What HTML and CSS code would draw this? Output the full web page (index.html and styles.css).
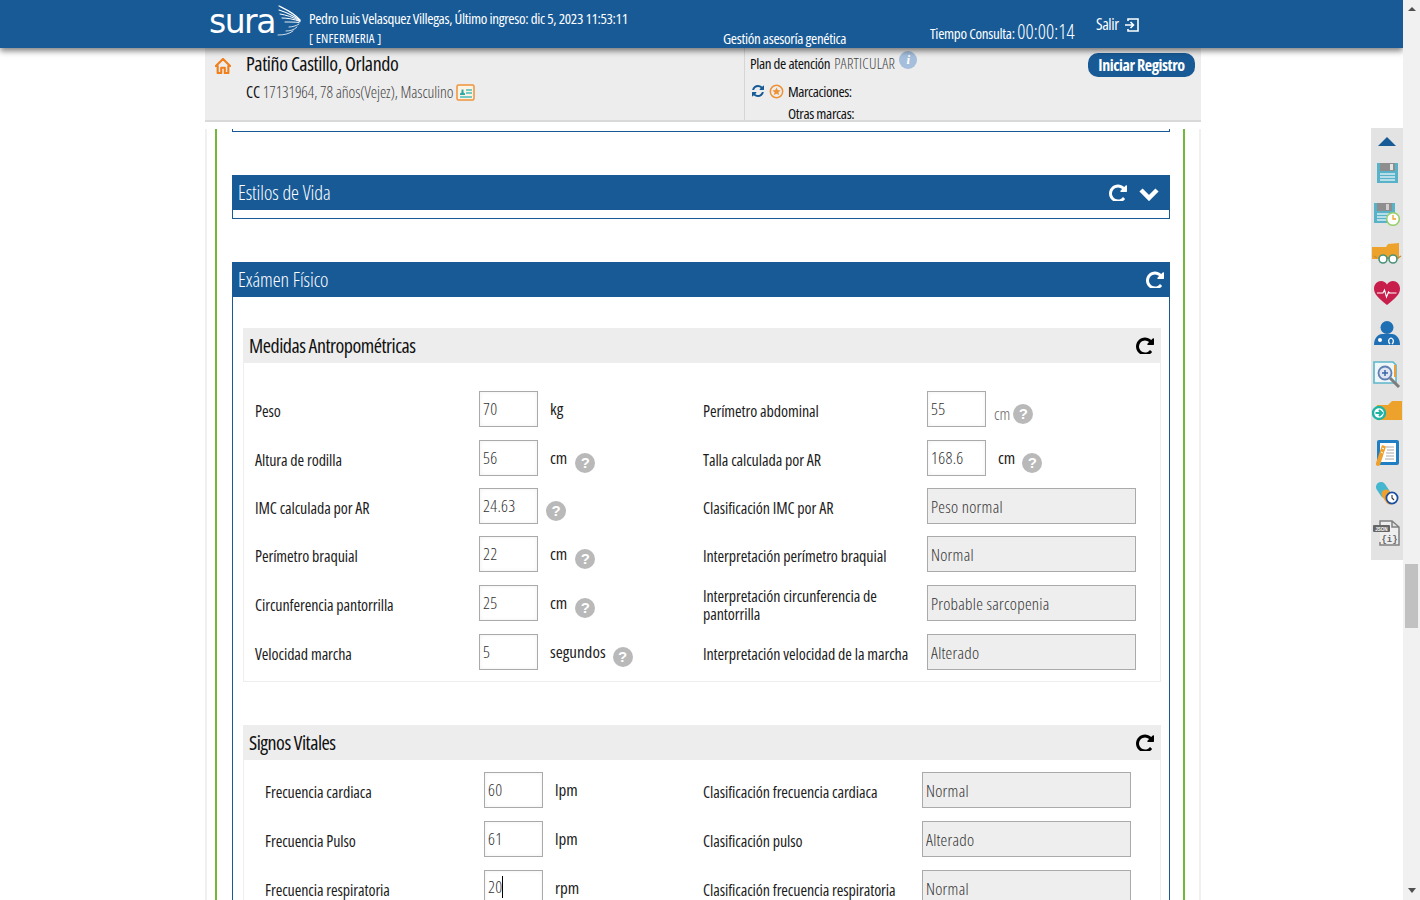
FILE: index.html
```html
<!DOCTYPE html>
<html lang="es">
<head>
<meta charset="utf-8">
<title>Historia clínica</title>
<link rel="stylesheet" href="styles.css">
</head>
<body>
<div class="viewport">
  <header class="topbar">
    <div class="logo">
      <span class="logo-text">sura</span>
      <svg class="logo-wing" viewBox="0 0 24 34" width="24" height="34" fill="none" stroke="#fff" stroke-linecap="round">
        <path d="M2 1 C8 4 17 8 23 15" stroke-width="1.2"/>
        <path d="M2 5 C8 7 16 10 23 15.500" stroke-width="1.1"/>
        <path d="M3 9 C9 10 16 12 23 16" stroke-width="1"/>
        <path d="M5 13 C10 13 17 14 23 16.500" stroke-width="1"/>
        <path d="M8 17 C12 17 18 17 22 17.500" stroke-width=".9"/>
        <path d="M22 19 C19 21 15 22 12 22" stroke-width=".8"/>
        <path d="M20 22 C17 25 13 26 9 26" stroke-width=".8"/>
        <path d="M16 26 C12 29 7 30 1 30" stroke-width=".8"/>
      </svg>
    </div>
    <div class="user">
      <div class="user-name">Pedro Luis Velasquez Villegas, Último ingreso: dic 5, 2023 11:53:11</div>
      <div class="user-role">[ ENFERMERIA ]</div>
    </div>
    <div class="module">Gestión asesoría genética</div>
    <div class="timer"><span class="timer-label">Tiempo Consulta:</span> <span class="timer-value">00:00:14</span></div>
    <div class="exit">Salir
      <svg viewBox="0 0 16 16" width="16" height="16" fill="none" stroke="#fff" stroke-width="1.6"><path d="M4 4V2h10v12H4v-2"/><path d="M1 8h8M6.500 5l3 3-3 3"/></svg>
    </div>
  </header>

  <div class="page">
    <section class="patient">
      <div class="patient-left">
        <svg class="home" viewBox="0 0 18 18" width="16" height="16"><path d="M9 1 L17 9 L15 9 L15 17 L11 17 L11 11 L7 11 L7 17 L3 17 L3 9 L1 9 Z" fill="none" stroke="#f07f1c" stroke-width="2.400" stroke-linejoin="round"/></svg>
        <div>
          <div class="patient-name">Patiño Castillo, Orlando</div>
          <div class="patient-id"><span class="id-type">CC</span> 17131964, 78 años(Vejez), Masculino
            <svg class="card" viewBox="0 0 19 17" width="19" height="17"><rect x="1" y="1" width="17" height="15" rx="1.500" fill="#fbf3e4" stroke="#f0923a" stroke-width="1.500"/><path d="M4 11h5V9.500L7.500 8.500V5.500h-2v3L4 9.500Z" fill="#2aa9a5"/><path d="M10 6h6M10 9h6M4 13h12" stroke="#4cbcb8" stroke-width="1.300"/></svg>
          </div>
        </div>
      </div>
      <div class="patient-right">
        <div class="plan">Plan de atención <span class="plan-value">PARTICULAR</span><span class="info">i</span></div>
        <div class="marks">
          <svg viewBox="0 0 1536 1536" width="12" height="12" fill="#175a96"><path d="M1511 928q0 5-1 7-64 268-268 434.5t-478 166.5q-146 0-282.5-55t-243.5-157l-129 129q-19 19-45 19t-45-19-19-45v-448q0-26 19-45t45-19h448q26 0 45 19t19 45-19 45l-137 137q71 66 161 102t187 36q134 0 250-65t186-179q11-17 53-117 8-23 30-23h192q13 0 22.5 9.5t9.5 22.5zm25-800v448q0 26-19 45t-45 19h-448q-26 0-45-19t-19-45 19-45l138-138q-148-137-349-137-134 0-250 65t-186 179q-11 17-53 117-8 23-30 23h-199q-13 0-22.5-9.5t-9.5-22.5v-7q65-268 270-434.5t480-166.5q146 0 284 55.5t245 156.5l130-129q19-19 45-19t45 19 19 45z"/></svg>
          <svg viewBox="0 0 16 16" width="15" height="15"><circle cx="8" cy="8" r="6.600" fill="none" stroke="#ef9236" stroke-width="1.600"/><path d="M8 3.600l1.300 2.900 3.100.3-2.300 2 .7 3L8 10.300l-2.800 1.500.7-3-2.300-2 3.100-.3Z" fill="#ef9236"/></svg>
          <span>Marcaciones:</span>
        </div>
        <div class="other-marks">Otras marcas:</div>
      </div>
      <button class="start-btn">Iniciar Registro</button>
    </section>

    <main class="content">
      <div class="frame">
        <div class="panel-end"></div>

        <section class="panel collapsed">
          <div class="panel-head">
            <span>Estilos de Vida</span>
            <span class="head-tools">
              <svg class="reload" viewBox="0 0 1536 1536"><use href="#repeat"/></svg>
              <svg class="chev" viewBox="0 0 20 14" width="20" height="14" fill="none" stroke="#fff" stroke-width="4.500"><path d="M2 3l8 8 8-8"/></svg>
            </span>
          </div>
        </section>

        <section class="panel">
          <div class="panel-head">
            <span>Exámen Físico</span>
            <span class="head-tools">
              <svg class="reload" viewBox="0 0 1536 1536"><use href="#repeat"/></svg>
            </span>
          </div>
          <div class="panel-body">
            <section class="sub">
              <div class="sub-head"><span>Medidas Antropométricas</span><svg class="reload dark" viewBox="0 0 1536 1536"><use href="#repeat"/></svg></div>
              <div class="sub-body">
                <div class="row">
                  <label class="lbl">Peso</label>
                  <div class="cell"><input class="inp" value="70"><span class="unit">kg</span></div>
                  <label class="lbl">Perímetro abdominal</label>
                  <div class="cell"><input class="inp" value="55"><span class="unit unit-soft">cm</span><span class="help help-near">?</span></div>
                </div>
                <div class="row row-wide">
                  <label class="lbl">Altura de rodilla</label>
                  <div class="cell"><input class="inp" value="56"><span class="unit">cm</span><span class="help">?</span></div>
                  <label class="lbl">Talla calculada por AR</label>
                  <div class="cell"><input class="inp" value="168.6"><span class="unit">cm</span><span class="help help-tight">?</span></div>
                </div>
                <div class="row">
                  <label class="lbl">IMC calculada por AR</label>
                  <div class="cell"><input class="inp" value="24.63"><span class="help help-only">?</span></div>
                  <label class="lbl">Clasificación IMC por AR</label>
                  <div class="cell"><input class="inp ro" value="Peso normal" readonly></div>
                </div>
                <div class="row">
                  <label class="lbl">Perímetro braquial</label>
                  <div class="cell"><input class="inp" value="22"><span class="unit">cm</span><span class="help">?</span></div>
                  <label class="lbl">Interpretación perímetro braquial</label>
                  <div class="cell"><input class="inp ro" value="Normal" readonly></div>
                </div>
                <div class="row row-wide">
                  <label class="lbl">Circunferencia pantorrilla</label>
                  <div class="cell"><input class="inp" value="25"><span class="unit">cm</span><span class="help">?</span></div>
                  <label class="lbl lbl-two">Interpretación circunferencia de pantorrilla</label>
                  <div class="cell"><input class="inp ro" value="Probable sarcopenia" readonly></div>
                </div>
                <div class="row row-wide">
                  <label class="lbl">Velocidad marcha</label>
                  <div class="cell"><input class="inp" value="5"><span class="unit">segundos</span><span class="help help-tight">?</span></div>
                  <label class="lbl">Interpretación velocidad de la marcha</label>
                  <div class="cell"><input class="inp ro" value="Alterado" readonly></div>
                </div>
              </div>
            </section>

            <section class="sub">
              <div class="sub-head"><span>Signos Vitales</span><svg class="reload dark" viewBox="0 0 1536 1536"><use href="#repeat"/></svg></div>
              <div class="sub-body vitals">
                <div class="row">
                  <label class="lbl">Frecuencia cardiaca</label>
                  <div class="cell"><input class="inp" value="60"><span class="unit">lpm</span></div>
                  <label class="lbl">Clasificación frecuencia cardiaca</label>
                  <div class="cell"><input class="inp ro" value="Normal" readonly></div>
                </div>
                <div class="row row-wide">
                  <label class="lbl">Frecuencia Pulso</label>
                  <div class="cell"><input class="inp" value="61"><span class="unit">lpm</span></div>
                  <label class="lbl">Clasificación pulso</label>
                  <div class="cell"><input class="inp ro" value="Alterado" readonly></div>
                </div>
                <div class="row row-wide">
                  <label class="lbl">Frecuencia respiratoria</label>
                  <div class="cell"><span class="inp inp-focus">20</span><span class="unit">rpm</span></div>
                  <label class="lbl">Clasificación frecuencia respiratoria</label>
                  <div class="cell"><input class="inp ro" value="Normal" readonly></div>
                </div>
              </div>
            </section>
          </div>
        </section>
      </div>
    </main>
  </div>

  <nav class="tools">
    <div class="tool tool-first"><svg viewBox="0 0 18 9" width="18" height="9"><path d="M0 9 L9 0 L18 9Z" fill="#175a96"/></svg></div>
    <div class="tool"><svg viewBox="0 0 21 20" width="21" height="20"><path d="M0 0h21v20H0z" fill="#58b3c9"/><path d="M3 0h15v8H3z" fill="#8e8e8e"/><path d="M13 1h3v6h-3z" fill="#e4e4e4"/><path d="M3 11h15M3 14h15M3 17h15" stroke="#d8eef3" stroke-width="1.500"/></svg></div>
    <div class="tool tool-low"><svg viewBox="0 0 26 23" width="26" height="23"><path d="M0 0h21v20H0z" fill="#58b3c9"/><path d="M3 0h15v8H3z" fill="#8e8e8e"/><path d="M12 1h3v6h-3z" fill="#cfcfcf"/><path d="M3 11h12M3 14h10M3 17h9" stroke="#d8eef3" stroke-width="1.500"/><circle cx="19" cy="16" r="6.300" fill="#fff" stroke="#97cf6a" stroke-width="1.500"/><path d="M19 12v4h3" stroke="#f0a030" stroke-width="1.300" fill="none"/></svg></div>
    <div class="tool"><svg viewBox="0 0 30 21" width="30" height="21"><path d="M0 4h14l2-3 11-1v16H0z" fill="#eda32b"/><path d="M2 13l3 2M14 15h3M26 15l3-2" stroke="#c98a3a" stroke-width="1.400"/><circle cx="11" cy="16" r="4" fill="#fff" stroke="#4a9278" stroke-width="1.600"/><circle cx="21" cy="16" r="4" fill="#fff" stroke="#4a9278" stroke-width="1.600"/></svg></div>
    <div class="tool"><svg viewBox="0 0 26 24" width="26" height="24"><path d="M13 24C5 17.500 0 13.500 0 7.500C0 3 3.500 0 7 0c2.500 0 4.800 1.300 6 3.500C14.200 1.300 16.500 0 19 0c3.500 0 7 3 7 7.500C26 13.500 21 17.500 13 24Z" fill="#c71e4b"/><path d="M3 12h6l1.500-3 2 7 2-5 1 1h7" fill="none" stroke="#fff" stroke-width="1.100"/></svg></div>
    <div class="tool"><svg viewBox="0 0 26 24" width="26" height="24"><circle cx="13" cy="6.500" r="6.500" fill="#1f6fb5"/><path d="M0 24c0-7 4-11 8-11h10c4 0 8 4 8 11Z" fill="#1f6fb5"/><circle cx="6" cy="19" r="2" fill="#fff"/><path d="M16 23c-2-2-2-5 1-6 3 1 3 4 1 6" fill="none" stroke="#fff" stroke-width="1.300"/></svg></div>
    <div class="tool tool-low"><svg viewBox="0 0 28 27" width="28" height="27"><path d="M1 1h19l3 3v18H1z" fill="#eef6f8" stroke="#5cb6cb" stroke-width="1.600"/><path d="M22 4v12" stroke="#ee9f3a" stroke-width="2"/><circle cx="12" cy="12" r="6.500" fill="#dfe6f1" stroke="#5f7fb4" stroke-width="1.800"/><path d="M9 12h6M12 9v6" stroke="#3c67a8" stroke-width="1.500"/><path d="M17 17l9 9" stroke="#7d7d7d" stroke-width="3"/></svg></div>
    <div class="tool tool-high"><svg viewBox="0 0 30 20" width="30" height="20"><path d="M5 4h11l4-4h10v19H5z" fill="#eda32b"/><circle cx="7" cy="12" r="6" fill="#fff" stroke="#1fb3a4" stroke-width="2.400"/><path d="M3.500 12h6M7 9l3 3-3 3" stroke="#1fb3a4" stroke-width="2.200" fill="none"/></svg></div>
    <div class="tool"><svg viewBox="0 0 24 27" width="24" height="27"><rect x="2" y="0" width="22" height="25" rx="2" fill="#1f7fc2"/><path d="M5 3h16v19H5z" fill="#fff"/><path d="M11 7h8M12 10h7M11 13h8M11 16h8M10 19h9" stroke="#aaa" stroke-width="1"/><path d="M7 5l4 1.500L5 25c-1 2-5 1-4-2Z" fill="#efa12f"/><path d="M7 8l2 1M6 12l2 1" stroke="#fff" stroke-width="1"/></svg></div>
    <div class="tool"><svg viewBox="0 0 24 24" width="24" height="24"><path d="M6 6L10 12" stroke="#45b6cf" stroke-width="10" stroke-linecap="round"/><path d="M11 13L15 19" stroke="#efa12f" stroke-width="9" stroke-linecap="round"/><circle cx="17" cy="17" r="5.600" fill="#fff" stroke="#1b4f9e" stroke-width="1.800"/><path d="M17 14v3l2 2" stroke="#333" stroke-width="1.100" fill="none"/></svg></div>
    <div class="tool"><svg viewBox="0 0 28 26" width="28" height="26"><path d="M7 6V1h12l7 6v18H7v-3M19 1v6h7" fill="#eee" stroke="#808080" stroke-width="1.500"/><rect x="0" y="5" width="17" height="7" rx="1" fill="#666"/><text x="8.500" y="10.500" class="json-label">JSON</text><text x="16.500" y="22" class="json-body">{i}</text></svg></div>
  </nav>
</div>

<div class="scrollbar">
  <span class="sb-up"></span>
  <div class="sb-thumb"></div>
  <span class="sb-down"></span>
</div>

<svg class="defs" width="0" height="0"><defs><path id="repeat" d="M1536 256v448q0 26-19 45t-45 19h-448q-42 0-59-40-17-39 14-69l138-138q-148-137-349-137-104 0-198.5 40.5t-163.5 109.5-109.5 163.5-40.5 198.5 40.5 198.5 109.5 163.5 163.5 109.5 198.5 40.5q119 0 225-52t179-147q7-10 23-12 15 0 25 9l137 138q9 8 9.500 20.500t-7.500 22.500q-109 132-264 204.500t-327 72.500q-156 0-298-61t-245-164-164-245-61-298 61-298 164-245 245-164 298-61q147 0 284.500 55.500t244.500 156.500l130-129q29-31 70-14 39 17 39 59z"/></defs></svg>
</body>
</html>
```
FILE: styles.css
```css
* { box-sizing: border-box; }
html, body { margin: 0; height: 900px; overflow: hidden; }
body {
  display: flex;
  background: #fff;
  color: #222;
  font-family: "Open Sans", "Liberation Sans", sans-serif;
  font-stretch: 75%;
  font-size: 16px;
}
.defs { position: absolute; }
.viewport { position: relative; flex: 1; height: 900px; overflow: hidden; }

/* scrollbar */
.scrollbar { width: 17px; height: 900px; background: #f1f1f1; display: flex; flex-direction: column; }
.sb-up, .sb-down { width: 0; height: 0; border: solid transparent; border-width: 0 4px; margin-left: 5px; }
.sb-up { border-bottom: 4px solid #505050; margin-top: 7px; }
.sb-down { border-top: 5px solid #505050; margin-top: 260px; }
.sb-thumb { height: 64px; margin: 553px 2px 0; background: #c1c1c1; flex: none; }

/* header */
.topbar {
  position: relative; z-index: 2;
  height: 48px;
  background: #175a96;
  color: #fff;
  display: flex;
  box-shadow: 0 3px 6px rgba(0,0,0,.5);
  padding-left: 209px;
}
.logo { width: 100px; display: flex; align-items: flex-start; flex: none; }
.logo-text { font-family: "DejaVu Sans", sans-serif; font-stretch: normal; font-size: 33px; line-height: 43px; letter-spacing: -1.500px; width: 68px; }
.logo-wing { margin-top: 5px; }
.user { width: 414px; flex: none; padding-top: 8px; }
.user-name { font-size: 15px; line-height: 20px; letter-spacing: -.33px; }
.user-role { font-size: 13px; line-height: 20px; letter-spacing: .15px; }
.module { width: 207px; flex: none; padding-top: 28px; font-size: 15px; line-height: 20px; letter-spacing: -.32px; }
.timer { width: 166px; flex: none; padding-top: 20px; font-size: 15px; line-height: 24px; letter-spacing: -.3px; }
.timer-value { font-size: 20px; font-weight: 300; letter-spacing: .1px; }
.exit { display: flex; gap: 5px; padding-top: 14px; font-size: 16px; line-height: 20px; align-items: flex-start; letter-spacing: -.4px; }
.exit svg { margin-top: 3px; }

/* page */
.page { width: 996px; margin-left: 205px; }
.patient {
  position: relative;
  height: 74px;
  background: #ededed;
  border-bottom: 2px solid #d9d9d9;
  display: flex;
}
.patient-left { width: 540px; flex: none; display: flex; gap: 15px; padding-left: 10px; border-right: 1px solid #d5d5d5; }
.home { margin-top: 10px; flex: none; }
.patient-name { font-size: 20px; line-height: 28px; padding-top: 2px; color: #111; letter-spacing: -.4px; }
.patient-id { font-size: 16px; font-weight: 300; line-height: 20px; margin-top: 4px; color: #444; letter-spacing: -.1px; }
.id-type { font-weight: 400; color: #111; }
.card { vertical-align: -3px; margin-left: 0; }
.patient-right { padding-left: 5px; font-size: 15px; color: #111; letter-spacing: -.35px; }
.plan { line-height: 20px; padding-top: 5px; display: flex; }
.plan-value { color: #444; margin-left: 4px; font-weight: 300; letter-spacing: .25px; }
.info { width: 18px; height: 18px; margin: -2px 0 0 4px; border-radius: 50%; background: #a4bedc; color: #fff; font: italic 700 13px/18px "Liberation Serif", serif; text-align: center; }
.marks { display: flex; align-items: center; gap: 5px; margin-top: 8px; line-height: 20px; padding-left: 2px; letter-spacing: -.42px; }
.marks span { margin-left: -1px; }
.other-marks { padding-left: 38px; margin-top: 2px; line-height: 20px; }
.start-btn {
  position: absolute; top: 5px; right: 6px;
  width: 107px; height: 24px;
  border: 0; border-radius: 10px;
  background: #175a96; color: #fff;
  font: 700 16px/24px "Open Sans", sans-serif;
  font-stretch: 75%;
  letter-spacing: -.45px;
  padding: 0;
}

/* content */
.content { height: 778px; border: solid #f0f0f0; border-width: 0 2px; }
.frame {
  width: 970px;
  margin: 7px 0 0 8px;
  height: 780px;
  border: solid #73b83a; border-width: 0 2px;
  padding: 0 13px 0 15px;
}
.panel-end { height: 3px; border: 1px solid #175a96; border-top: 0; margin-bottom: 43px; }
.panel { border: solid #175a96; border-width: 0 1px 1px; margin-bottom: 43px; }
.collapsed { height: 44px; }
.panel-head {
  height: 35px;
  margin: 0 -1px;
  padding: 0 6px;
  background: #175a96;
  color: #fff;
  display: flex; align-items: center; justify-content: space-between;
  font-size: 20px;
  font-weight: 300;
  letter-spacing: -.05px;
}
.head-tools { display: flex; align-items: center; gap: 12px; }
.collapsed .head-tools { padding-right: 5px; }
.reload { width: 18px; height: 18px; fill: #fff; margin-top: -2px; }
.chev { margin-top: 3px; }
.dark { fill: #000; }
.panel-body { padding: 31px 8px 0 10px; }
.sub { margin-bottom: 43px; }
.sub-head {
  height: 35px;
  background: #ededed;
  display: flex; align-items: center; justify-content: space-between;
  padding: 0 7px 0 6px;
  font-size: 20px;
  letter-spacing: -.5px;
  color: #111;
}
.sub-body {
  height: 319px;
  padding: 28px 0 0 11px;
  border: solid #eeeeee; border-width: 0 1px 1px;
}
.vitals { height: auto; padding: 12px 0 0 21px; border-bottom: 0; }
.row { display: grid; grid-template-columns: 224px 224px 224px 1fr; grid-template-rows: 36px; height: 36px; margin-bottom: 12px; align-items: center; }
.row-wide { margin-top: 13px; }
.vitals .row { grid-template-columns: 219px 219px 219px 1fr; }
.lbl { font-size: 16px; line-height: 18px; color: #1c1c1c; padding-top: 4px; letter-spacing: -.09px; }
.lbl-two { padding: 3px 10px 0 0; }
.cell { display: flex; align-items: center; }
.inp {
  width: 59px; height: 36px;
  border: 1px solid #aaa;
  background: #fff;
  box-shadow: inset 0 0 4px rgba(0,0,0,.06);
  padding: 0 3px 2px;
  font: 300 17px/32px "Open Sans", sans-serif;
  font-stretch: 75%;
  letter-spacing: .3px;
  color: #333;
  flex: none;
  outline: none;
}
.inp-focus { display: block; }
.inp-focus::after { content: ""; display: inline-block; width: 1px; height: 22px; background: #000; vertical-align: -5px; }
.ro { width: 209px; background: #eeeeee; box-shadow: none; padding-bottom: 0; letter-spacing: .25px; }
.unit { margin: -2px 0 0 12px; font-size: 17px; color: #222; }
.unit-soft { margin: 8px 0 0 8px; color: #666; font-weight: 300; }
.help {
  width: 20px; height: 20px; margin: 10px 0 0 8px;
  border-radius: 50%;
  background: #b9b9b9; color: #fff;
  font: 700 15px/20px "Liberation Sans", sans-serif;
  text-align: center;
  flex: none;
}
.help-tight { margin-left: 7px; }
.help-near { margin-left: 3px; }

/* side tools */
.tools {
  position: absolute; z-index: 3;
  top: 128px; right: 0;
  width: 32px; height: 432px;
  background: #e3e3e3;
  display: flex; flex-direction: column; align-items: center;
}
.tool { height: 40px; flex: none; display: flex; align-items: center; justify-content: center; width: 100%; }
.tool-first { height: 25px; padding-top: 2px; }
.tool-low { padding-top: 2px; }
.tool-high { padding-bottom: 4px; }
.json-label { font: 700 4.500px "Liberation Sans", sans-serif; fill: #fff; text-anchor: middle; }
.json-body { font: 700 9px "Liberation Mono", monospace; fill: #666; text-anchor: middle; }
```
